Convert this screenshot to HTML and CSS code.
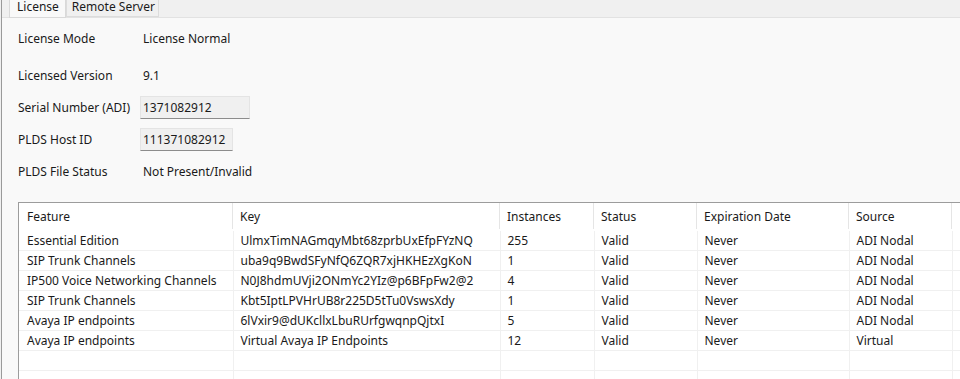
FILE: index.html
```html
<!DOCTYPE html>
<html lang="en">
<head>
    <meta charset="UTF-8">
    <title>License</title>
    <link rel="stylesheet" href="styles.css">
</head>
<body>

<div class="tabs">
    <div class="tab active">License</div>
    <div class="tab">Remote Server</div>
</div>

<div class="panel">
    <div class="fields">
        <div class="field first">
            <div class="label">License Mode</div>
            <div class="value">License Normal</div>
        </div>
        <div class="field">
            <div class="label">Licensed Version</div>
            <div class="value">9.1</div>
        </div>
        <div class="field">
            <div class="label">Serial Number (ADI)</div>
            <div class="box serial">1371082912</div>
        </div>
        <div class="field">
            <div class="label">PLDS Host ID</div>
            <div class="box host">111371082912</div>
        </div>
        <div class="field">
            <div class="label">PLDS File Status</div>
            <div class="value">Not Present/Invalid</div>
        </div>
    </div>

    <div class="grid-wrap">
        <table class="features">
            <colgroup>
                <col class="c-feature">
                <col class="c-key">
                <col class="c-inst">
                <col class="c-status">
                <col class="c-exp">
                <col class="c-source">
                <col class="c-extra">
            </colgroup>
            <thead>
                <tr>
                    <th>Feature</th>
                    <th>Key</th>
                    <th>Instances</th>
                    <th>Status</th>
                    <th>Expiration Date</th>
                    <th>Source</th>
                    <th></th>
                </tr>
            </thead>
            <tbody>
                <tr><td>Essential Edition</td><td>UlmxTimNAGmqyMbt68zprbUxEfpFYzNQ</td><td>255</td><td>Valid</td><td>Never</td><td>ADI Nodal</td><td></td></tr>
                <tr><td>SIP Trunk Channels</td><td>uba9q9BwdSFyNfQ6ZQR7xjHKHEzXgKoN</td><td>1</td><td>Valid</td><td>Never</td><td>ADI Nodal</td><td></td></tr>
                <tr><td>IP500 Voice Networking Channels</td><td>N0J8hdmUVji2ONmYc2YIz@p6BFpFw2@2</td><td>4</td><td>Valid</td><td>Never</td><td>ADI Nodal</td><td></td></tr>
                <tr><td>SIP Trunk Channels</td><td>Kbt5IptLPVHrUB8r225D5tTu0VswsXdy</td><td>1</td><td>Valid</td><td>Never</td><td>ADI Nodal</td><td></td></tr>
                <tr><td>Avaya IP endpoints</td><td>6lVxir9@dUKcllxLbuRUrfgwqnpQjtxI</td><td>5</td><td>Valid</td><td>Never</td><td>ADI Nodal</td><td></td></tr>
                <tr><td>Avaya IP endpoints</td><td>Virtual Avaya IP Endpoints</td><td>12</td><td>Valid</td><td>Never</td><td>Virtual</td><td></td></tr>
                <tr><td></td><td></td><td></td><td></td><td></td><td></td><td></td></tr>
                <tr><td></td><td></td><td></td><td></td><td></td><td></td><td></td></tr>
            </tbody>
        </table>
    </div>
</div>

</body>
</html>
```

FILE: styles.css
```css
html, body {
    margin: 0;
    padding: 0;
    overflow: hidden;
    height: 379px;
}
body {
    font-family: "Noto Sans", sans-serif;
    font-size: 12px;
    color: #1a1a1a;
    background-color: #f0f0f0;
    border-left: 1px solid #9a9a9a;
    margin-left: 1px;
}
.tabs {
    display: flex;
    height: 17px;
    padding-left: 7px;
    border-bottom: 1px solid #e2e2e2;
}
.tab {
    height: 17px;
    line-height: 13px;
    padding: 0 3px 0 5px;
    border: 1px solid #dcdcdc;
    border-top: none;
    background-color: #f0f0f0;
    box-sizing: border-box;
}
.tab.active {
    padding: 0 6px 0 7px;
    height: 18px;
    margin-bottom: -1px;
    background-color: #f9f9f9;
    border-color: #d9d9d9;
}
.panel {
    background-color: #f9f9f9;
    height: 400px;
    padding-top: 4px;
}
.fields {
    padding-left: 16px;
}
.field {
    display: flex;
    align-items: center;
    height: 32px;
}
.field.first {
    margin-bottom: 5px;
}
.label {
    width: 124px;
}
.value {
    padding-left: 1px;
}
.box {
    height: 23px;
    line-height: 21px;
    box-sizing: border-box;
    padding-left: 2px;
    background-color: #f0f0f0;
    border: 1px solid #e4e4e4;
    border-bottom-color: #8c8c8c;
    margin-left: -2px;
}
.box.serial {
    width: 110px;
}
.box.host {
    width: 93px;
}
.grid-wrap {
    margin: 15px 0 0 16px;
    border: 1px solid #9c9c9c;
    border-right: none;
    background-color: #ffffff;
    width: 1100px;
    height: 200px;
}
.features {
    border-collapse: collapse;
    table-layout: fixed;
    width: 1050px;
}
.c-feature { width: 214px; }
.c-key { width: 267px; }
.c-inst { width: 94px; }
.c-status { width: 103px; }
.c-exp { width: 152px; }
.c-source { width: 103px; }
.c-extra { width: 117px; }
.features th {
    font-weight: normal;
    text-align: left;
    height: 26px;
    padding: 0 0 0 7px;
    box-shadow: inset -1px 0 0 #e5e5e5;
    border-bottom: 2px solid #ffffff;
}
.features th:first-child {
    padding-left: 8px;
}
.features td {
    height: 19px;
    padding: 0 0 0 7px;
    border-right: 1px solid #f0f0f0;
    border-bottom: 1px solid #f0f0f0;
    white-space: nowrap;
    overflow: hidden;
}
.features td:first-child {
    padding-left: 8px;
}
```
